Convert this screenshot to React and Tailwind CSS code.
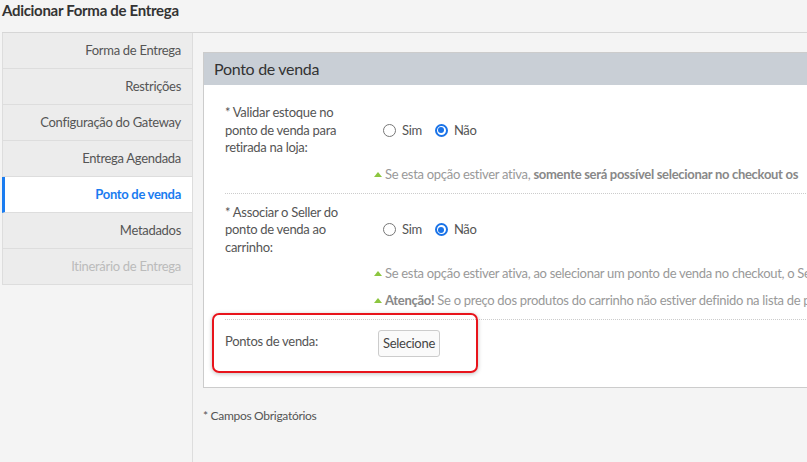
const navItems = [
  { label: 'Forma de Entrega' },
  { label: 'Restrições' },
  { label: 'Configuração do Gateway' },
  { label: 'Entrega Agendada' },
  { label: 'Ponto de venda', active: true },
  { label: 'Metadados' },
  { label: 'Itinerário de Entrega', disabled: true },
];

function Radio({ checked, label }) {
  return (
    <label className="flex items-center gap-[6px] text-[13px] text-[#555]">
      {checked ? (
        <span className="w-[13px] h-[13px] rounded-full border-2 border-[#1a73e8] flex items-center justify-center">
          <span className="w-[6px] h-[6px] rounded-full bg-[#1a73e8]" />
        </span>
      ) : (
        <span className="w-[13px] h-[13px] rounded-full border border-[#777] bg-white" />
      )}
      {label}
    </label>
  );
}

function Hint({ children }) {
  return (
    <div className="flex items-center gap-[3px] whitespace-nowrap text-[13px] text-[#999] leading-[17px]">
      <span className="w-0 h-0 border-l-[4px] border-r-[4px] border-b-[5px] border-l-transparent border-r-transparent border-b-[#8cc63f]" />
      <span>{children}</span>
    </div>
  );
}

function Field({ lines, children, hints }) {
  return (
    <div className="border-b border-dotted border-[#ccc] pt-[10px] pb-[10px]">
      <div className="flex items-center">
        <div className="w-[150px] shrink-0 text-[13px] leading-[17.5px] text-[#555]">
          {lines.map((line) => (
            <div key={line}>{line}</div>
          ))}
        </div>
        <div className="flex items-center gap-[13px] pl-[8px]">{children}</div>
      </div>
      {hints && <div className="ml-[149px] mt-[9px] flex flex-col gap-[10px]">{hints}</div>}
    </div>
  );
}

export default function App() {
  return (
    <div
      className="w-[807px] h-[462px] overflow-hidden bg-[#f4f4f4] pl-[2px] tracking-[-0.3px]"
      style={{ fontFamily: 'Lato, "Noto Sans", sans-serif' }}
    >
      <h1 className="h-[32px] leading-[20px] text-[15px] font-bold text-[#333]">Adicionar Forma de Entrega</h1>

      <div className="flex h-[430px] border-t border-[#d6d6d6]">
        <nav className="w-[190px] shrink-0 self-start border-l border-[#ddd] bg-[#ececec]">
          {navItems.map((item) => (
            <div
              key={item.label}
              className={
                item.active
                  ? 'h-[36px] flex items-center justify-end pr-[11px] bg-white border-l-[3px] border-l-[#1a7cf0] -ml-px border-b border-[#ddd] text-[13px] font-bold text-[#1a7cf0]'
                  : item.disabled
                  ? 'h-[36px] flex items-center justify-end pr-[11px] border-b border-[#ddd] text-[13px] text-[#bbb]'
                  : 'h-[36px] flex items-center justify-end pr-[11px] border-b border-[#ddd] text-[13px] text-[#555]'
              }
            >
              {item.label}
            </div>
          ))}
        </nav>

        <main className="flex-1 min-w-0 border-l border-[#ddd] pl-[10px] pt-[19px]">
          <section className="relative w-[640px] bg-white border border-[#ccc]">
            <header className="h-[32px] bg-[#c9cfd6] flex items-center pl-[10px] text-[16px] text-[#333]">
              Ponto de venda
            </header>
            <div className="pl-[21px] pt-[9px] pb-[30px]">
              <Field
                lines={['* Validar estoque no', 'ponto de venda para', 'retirada na loja:']}
                hints={
                  <Hint>
                    Se esta opção estiver ativa, <b className="text-[#888]">somente será possível selecionar no checkout os</b>
                  </Hint>
                }
              >
                <Radio label="Sim" />
                <Radio checked label="Não" />
              </Field>
              <Field
                lines={['* Associar o Seller do', 'ponto de venda ao', 'carrinho:']}
                hints={
                  <>
                    <Hint>Se esta opção estiver ativa, ao selecionar um ponto de venda no checkout, o Se</Hint>
                    <Hint>
                      <b className="text-[#888]">Atenção!</b> Se o preço dos produtos do carrinho não estiver definido na lista de p
                    </Hint>
                  </>
                }
              >
                <Radio label="Sim" />
                <Radio checked label="Não" />
              </Field>
              <div className="flex items-start pt-[10px]">
                <div className="w-[150px] shrink-0 pt-[3px] text-[13px] leading-[17px] text-[#555]">Pontos de venda:</div>
                <button className="h-[27px] w-[62px] ml-[3px] flex items-center justify-center rounded-[3px] border border-[#ccc] bg-[#fafafa] text-[13px] leading-[17px] text-[#444]">
                  Selecione
                </button>
              </div>
            </div>
            <div className="absolute left-[8px] top-[260px] w-[266px] h-[60px] rounded-[7px] border-2 border-[#e8141c] shadow-[0_1px_4px_rgba(0,0,0,0.25)] pointer-events-none" />
          </section>
          <p className="mt-[19px] text-[12px] text-[#555]">* Campos Obrigatórios</p>
        </main>
      </div>
    </div>
  );
}
